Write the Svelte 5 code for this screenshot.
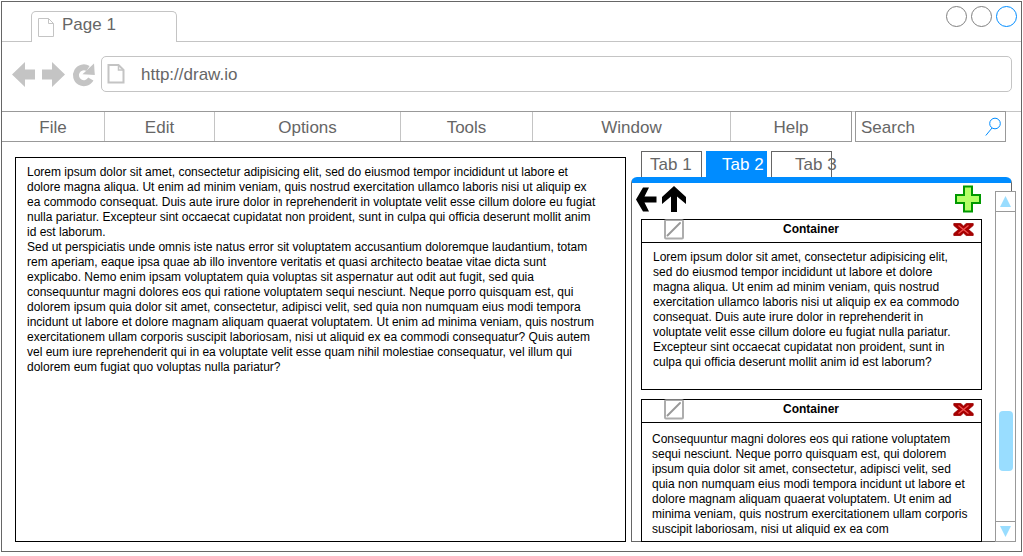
<script>
  const menus = [
    { name: 'File', size: 103 },
    { name: 'Edit', size: 110 },
    { name: 'Options', size: 186 },
    { name: 'Tools', size: 132 },
    { name: 'Window', size: 198 },
    { name: 'Help', size: 120 }
  ];
  const columns = menus.map((m) => `minmax(0, ${m.size}fr)`).join(' ');

  const article = [
    `Lorem ipsum dolor sit amet, consectetur adipisicing elit, sed do eiusmod tempor incididunt ut labore et
dolore magna aliqua. Ut enim ad minim veniam, quis nostrud exercitation ullamco laboris nisi ut aliquip ex
ea commodo consequat. Duis aute irure dolor in reprehenderit in voluptate velit esse cillum dolore eu fugiat
nulla pariatur. Excepteur sint occaecat cupidatat non proident, sunt in culpa qui officia deserunt mollit anim
id est laborum.`,
    `Sed ut perspiciatis unde omnis iste natus error sit voluptatem accusantium doloremque laudantium, totam
rem aperiam, eaque ipsa quae ab illo inventore veritatis et quasi architecto beatae vitae dicta sunt
explicabo. Nemo enim ipsam voluptatem quia voluptas sit aspernatur aut odit aut fugit, sed quia
consequuntur magni dolores eos qui ratione voluptatem sequi nesciunt. Neque porro quisquam est, qui
dolorem ipsum quia dolor sit amet, consectetur, adipisci velit, sed quia non numquam eius modi tempora
incidunt ut labore et dolore magnam aliquam quaerat voluptatem. Ut enim ad minima veniam, quis nostrum
exercitationem ullam corporis suscipit laboriosam, nisi ut aliquid ex ea commodi consequatur? Quis autem
vel eum iure reprehenderit qui in ea voluptate velit esse quam nihil molestiae consequatur, vel illum qui
dolorem eum fugiat quo voluptas nulla pariatur?`
  ];

  const cards = [
    {
      kind: 'first',
      text: `Lorem ipsum dolor sit amet, consectetur adipisicing elit,
sed do eiusmod tempor incididunt ut labore et dolore
magna aliqua. Ut enim ad minim veniam, quis nostrud
exercitation ullamco laboris nisi ut aliquip ex ea commodo
consequat. Duis aute irure dolor in reprehenderit in
voluptate velit esse cillum dolore eu fugiat nulla pariatur.
Excepteur sint occaecat cupidatat non proident, sunt in
culpa qui officia deserunt mollit anim id est laborum?`
    },
    {
      kind: 'second',
      text: `Consequuntur magni dolores eos qui ratione voluptatem
sequi nesciunt. Neque porro quisquam est, qui dolorem
ipsum quia dolor sit amet, consectetur, adipisci velit, sed
quia non numquam eius modi tempora incidunt ut labore et
dolore magnam aliquam quaerat voluptatem. Ut enim ad
minima veniam, quis nostrum exercitationem ullam corporis
suscipit laboriosam, nisi ut aliquid ex ea com`
    }
  ];
  let address = $state('http://draw.io');
  let query = $state('Search');
</script>

<div class="window">
  <header class="titlebar">
    <div class="page-tab">
      <svg width="17" height="20" viewBox="0 0 17 20" fill="none" stroke="#c4c4c4"><path d="M.5.5h10l5 5v13H.5zM10.500.5v5h5" /></svg>
      <span>Page 1</span>
    </div>
    <div class="controls">
      <button aria-label="Minimize"></button>
      <button aria-label="Maximize"></button>
      <button class="close" aria-label="Close"></button>
    </div>
  </header>

  <div class="toolbar">
    <button class="nav" aria-label="Back">
      <svg width="23" height="26" viewBox="0 0 23 26" fill="#c4c4c4"><path d="M0 12.500 13 0v7.500h10v10H13V25z" /></svg>
    </button>
    <button class="nav" aria-label="Forward">
      <svg width="23" height="26" viewBox="0 0 23 26" fill="#c4c4c4"><path d="M23 12.500 10 0v7.500H0v10h10V25z" /></svg>
    </button>
    <button class="nav" aria-label="Reload">
      <svg width="23" height="26" viewBox="0 0 23 26"><path d="M18.800 17A7.900 7.900 0 1 1 16 6.500" fill="none" stroke="#c4c4c4" stroke-width="6" /><path d="M22 1.500 22.800 13 10.500 12.300z" fill="#c4c4c4" /></svg>
    </button>
    <div class="address">
      <svg width="19" height="20" viewBox="0 0 19 20" fill="none" stroke="#c4c4c4"><path d="M1.500 1h10l5 5v12.500h-15z" stroke-width="2" /><path d="M11.500 1v5h5" stroke-width="1.500" /></svg>
      <input aria-label="Address" bind:value={address} />
    </div>
  </div>

  <div class="menurow">
    <nav class="menu" style:grid-template-columns={columns}>
      {#each menus as m}<button>{m.name}</button>{/each}
    </nav>
    <div class="search">
      <input aria-label="Search" bind:value={query} />
      <svg width="16" height="19" viewBox="0 0 16 19" fill="none" stroke="#008cff"><circle cx="10" cy="6.500" r="5.300" /><path d="M7 11 .8 18.500" /></svg>
    </div>
  </div>

  <main class="content">
    <article class="document">
      {#each article as p}<p>{p}</p>{/each}
    </article>

    <section class="side">
      <div class="tabs">
        <button class="tab one">Tab 1</button>
        <button class="tab two">Tab 2</button>
        <button class="tab three">Tab 3</button>
      </div>
      <div class="panel">
        <div class="body">
          <div class="actions">
            <button aria-label="Previous">
              <svg width="21" height="25" viewBox="0 0 21 25"><path d="M0 12.500 7 .5h6L8.500 9.500H20.500v6H8.500l4.500 9H7z" /></svg>
            </button>
            <button aria-label="Up">
              <svg width="24" height="27" viewBox="0 0 24 27"><path d="M12 0 24 11v7l-9-7.500V26H9V10.500L0 18v-7z" /></svg>
            </button>
            <button class="add" aria-label="Add">
              <svg width="27" height="28" viewBox="0 0 27 28"><path d="M9 1.500h8v8.500h8v8h-8v8.500H9V18H1v-8h8z" fill="#b3ff66" stroke="#009900" stroke-width="2" /></svg>
            </button>
          </div>
          {#each cards as card}
            <article class="card {card.kind}">
              <header>
                <button class="edit" aria-label="Edit">
                  <svg width="20" height="22" viewBox="0 0 20 22" fill="none" stroke="#999"><rect x="1" y="1" width="18" height="18.500" rx="1" stroke-width="2" stroke-opacity=".8" /><path d="M3.500 16.500 16 4" stroke-width="2" stroke-linecap="round" /></svg>
                </button>
                <h2>Container</h2>
                <button class="remove" aria-label="Remove">
                  <svg width="21" height="14" viewBox="0 0 21 14"><path d="M.8.500h7l2.700 2.500L13.200.5h7v2L15.500 6.500l4.700 4v2h-7l-2.700-2.500-2.700 2.500h-7v-2l4.700-4-4.700-4z" fill="#a80000" stroke="#990000" stroke-width=".8" /><path d="m5.500 2.500 10 8M15.500 2.500l-10 8" stroke="#f05050" stroke-width="1.200" /></svg>
                </button>
              </header>
              <p>{card.text}</p>
            </article>
          {/each}
        </div>
        <div class="scrollbar">
          <button aria-label="Scroll up"><svg width="11" height="11" viewBox="0 0 11 11" fill="#99ddff"><path d="M5.500 0 11 11H0z" /></svg></button>
          <div class="track"><span></span></div>
          <button aria-label="Scroll down"><svg width="11" height="11" viewBox="0 0 11 11" fill="#99ddff"><path d="M0 0h11L5.500 11z" /></svg></button>
        </div>
      </div>
    </section>
  </main>
</div>

<style>
  :global(body) { background: #fff; padding: 1px 1px 4px; }
  * { box-sizing: border-box; }
  svg { display: block; flex: none; }
  p, h2 { margin: 0; }
  p { white-space: pre-line; }
  button, input {
    font: inherit;
    color: inherit;
    background: none;
    border: 0;
    border-radius: 0;
    padding: 0;
    margin: 0;
    outline: 0;
    min-width: 0;
  }
  .window {
    border: 1px solid #666;
    min-height: calc(100vh - 5px);
    display: flex;
    flex-direction: column;
    font: 17px/20px "Liberation Sans", Arial, sans-serif;
    color: #666;
  }
  .titlebar {
    height: 40px;
    border-bottom: 1px solid #c4c4c4;
    display: flex;
    align-items: flex-end;
    justify-content: space-between;
    padding: 0 4px 0 29px;
  }
  .page-tab {
    width: 146px;
    height: 31px;
    margin-bottom: -1px;
    padding: 3px 6px;
    display: flex;
    gap: 7px;
    border: 1px solid #c4c4c4;
    border-bottom: 0;
    border-radius: 5px 5px 0 0;
    background: #fff;
  }
  .page-tab svg { margin-top: 3px; }
  .controls { display: flex; gap: 4px; align-self: flex-start; padding-top: 4px; }
  .controls button { width: 21px; height: 21px; border: 1px solid #808080; border-radius: 50%; }
  .controls .close { border-color: #008cff; }
  .toolbar { display: flex; gap: 7px; padding: 14px 9px 19px 10px; }
  .nav { flex: none; padding-top: 2px; }
  .address {
    flex: 1;
    height: 36px;
    display: flex;
    align-items: center;
    gap: 15px;
    padding: 0 5px;
    margin-left: -1px;
    border: 1px solid #c4c4c4;
    border-radius: 5px;
  }
  .address input { flex: 1; height: 24px; padding-top: 2px; }
  .menurow {
    display: flex;
    gap: 3px;
    padding-right: 15px;
    border-top: 1px solid #c4c4c4;
  }
  .menu {
    flex: 1;
    height: 31px;
    margin-top: -1px;
    display: grid;
    border: 1px solid #999;
    border-left: 0;
  }
  .menu button { border-right: 1px solid #c4c4c4; padding-top: 2px; }
  .menu button:last-child { border-right: 0; }
  .search {
    width: 151px;
    height: 31px;
    margin-top: -1px;
    padding: 0 4px 0 5px;
    display: flex;
    align-items: center;
    border: 1px solid #999;
  }
  .search input { flex: 1; height: 24px; padding-top: 2px; }
  .content {
    flex: 1;
    display: grid;
    grid-template-columns: minmax(0, 611fr) minmax(0, 381fr);
    gap: 5px;
    padding: 9px 9px 9px 13px;
  }
  .document {
    margin-top: 6px;
    padding: 7px 11px;
    border: 1px solid #000;
    font-size: 12px;
    line-height: 15px;
    color: #000;
  }
  .side { display: flex; flex-direction: column; }
  .tabs { display: flex; gap: 4px; padding-left: 10px; }
  .tab {
    width: 61px;
    height: 26px;
    border: 1px solid #666;
    border-bottom: 0;
    text-align: left;
    white-space: nowrap;
  }
  .one { padding-left: 8px; }
  .two { padding-left: 15px; background: #008cff; border-color: #008cff; color: #fff; }
  .three { padding-left: 23px; }
  .panel {
    flex: 1;
    display: flex;
    border: 1px solid #666;
    border-top: 6px solid #008cff;
    border-radius: 6px 6px 0 0;
  }
  .body {
    flex: 1;
    min-width: 0;
    display: flex;
    flex-direction: column;
    padding: 0 13px 0 9px;
    margin-bottom: -1px;
  }
  .actions {
    height: 36px;
    display: flex;
    align-items: center;
    gap: 5px;
    padding-bottom: 4px;
    margin-left: -5px;
  }
  .add { margin-left: auto; }
  .card {
    border: 1px solid #000;
    font-size: 12px;
    line-height: 15px;
    color: #000;
  }
  .first { min-height: 171px; margin-bottom: 9px; }
  .second { flex: 1; }
  .card header {
    height: 23px;
    display: grid;
    grid-template-columns: 1fr auto 1fr;
    align-items: start;
    padding: 0 7px 0 22px;
    border-bottom: 1px solid #000;
  }
  .card h2 { font-size: 12px; line-height: 18px; padding-right: 16px; }
  .edit { justify-self: start; margin-top: -1px; }
  .remove { justify-self: end; padding-top: 3px; }
  .first p { padding: 7px 4px 0 11px; }
  .second p { padding: 9px 4px 2px 10px; }
  .scrollbar {
    width: 21px;
    flex: none;
    margin: 8px -5px -1px 0;
    display: flex;
    flex-direction: column;
    border: 1px solid #999;
    background: #fff;
  }
  .scrollbar button { height: 20px; display: grid; place-items: center; border-bottom: 1px solid #999; }
  .scrollbar button:last-child { border-bottom: 0; border-top: 1px solid #999; }
  .track { flex: 1; display: flex; flex-direction: column; align-items: center; }
  .track::before { content: ""; flex: 4; }
  .track::after { content: ""; flex: 1; }
  .track span { width: 14px; height: 60px; border-radius: 4px; background: #99ddff; }
</style>
